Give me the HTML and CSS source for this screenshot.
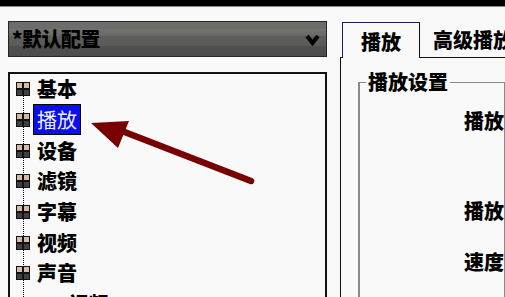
FILE: index.html
```html
<!DOCTYPE html>
<html lang="zh">
<head>
<meta charset="utf-8">
<link rel="stylesheet" href="styles.css">
</head>
<body>
<div class="topbar"></div>
<div class="main">
  <div class="left">
    <div class="combo">
      <span class="combo-text">*默认配置</span>
      <svg class="chev" width="15" height="12" viewBox="0 0 15 12"><polyline points="2,2 7.5,9 13,2" fill="none" stroke="#000" stroke-width="4"/></svg>
    </div>
    <div class="tree">
      <div class="row"><span class="plus"></span><span class="label">基本</span></div>
      <div class="row"><span class="plus"></span><span class="label selected">播放</span></div>
      <div class="row"><span class="plus"></span><span class="label">设备</span></div>
      <div class="row"><span class="plus"></span><span class="label">滤镜</span></div>
      <div class="row"><span class="plus"></span><span class="label">字幕</span></div>
      <div class="row"><span class="plus"></span><span class="label">视频</span></div>
      <div class="row"><span class="plus"></span><span class="label">声音</span></div>
      <div class="row"><span class="plus"></span><span class="label">3D 视频</span></div>
    </div>
  </div>
  <div class="right">
    <div class="tabs">
      <div class="tab active">播放</div>
      <div class="tab">高级播放</div>
    </div>
    <div class="panel">
      <fieldset class="group">
        <legend>播放设置</legend>
        <div class="fields">
          <div class="field f1">播放</div>
          <div class="field f2">播放</div>
          <div class="field f3">速度</div>
        </div>
      </fieldset>
    </div>
  </div>
</div>
<svg class="arrow" width="505" height="297" viewBox="0 0 505 297">
  <line x1="122" y1="131" x2="251" y2="181" stroke="#780000" stroke-width="6.5" stroke-linecap="round"/>
  <polygon points="91,123 129,121 118,148" fill="#780000"/>
</svg>
</body>
</html>
```
FILE: styles.css
```css
html, body {
  margin: 0;
  padding: 0;
  overflow: hidden;
}
body {
  width: 505px;
  height: 297px;
  background: #f9f9f9;
  font-family: "Noto Sans CJK SC", "Liberation Sans", sans-serif;
  font-size: 20px;
  font-weight: 900;
  color: #000;
  position: relative;
}
.topbar {
  height: 6px;
  background: #000;
  border-bottom: 1px solid #8c8c8c;
}
.main {
  display: flex;
  gap: 13px;
  padding: 14px 0 0 8px;
}
.left {
  width: 319px;
  flex: none;
  display: flex;
  flex-direction: column;
  gap: 15px;
}
.combo {
  box-sizing: border-box;
  height: 36px;
  border: 1px solid #262626;
  background: linear-gradient(#6c6c6a 0, #6c6c6a 22%, #72726f 22%, #686866 42%, #5e5e5c 42%, #5a5a58 72%, #4f4f4d 72%, #4c4c4a 100%);
  display: flex;
  align-items: center;
  justify-content: space-between;
  padding: 0 6px 0 3px;
}
.combo-text {
  line-height: 20px;
  letter-spacing: -0.5px;
}
.chev {
  display: block;
  margin-top: 2px;
}
.tree {
  border: 2px solid #111;
  height: 260px;
  box-sizing: border-box;
}
.row {
  height: 30.67px;
  display: flex;
  align-items: center;
  gap: 7px;
  padding-left: 6px;
}
.plus {
  position: relative;
  flex: none;
  width: 12px;
  height: 12px;
  border: 1px solid #111;
  background:
    linear-gradient(#111, #111) 5px 0 / 2px 100% no-repeat,
    linear-gradient(#111, #111) 0 5px / 100% 2px no-repeat,
    linear-gradient(to bottom, #d8b8a8 50%, #404040 50%);
}
.plus::after {
  content: "";
  position: absolute;
  left: 6px;
  top: 13px;
  height: 17px;
  border-left: 1px dotted #000;
}
.label {
  line-height: 20px;
  white-space: nowrap;
}
.label.selected {
  margin-left: -4px;
  padding: 0 3px;
  line-height: 29px;
  border: 1px solid #000;
  background: #0a0ff0;
  color: #eeeeff;
  font-weight: 400;
}
.right {
  flex: 1;
  min-width: 0;
  padding-top: 1px;
  display: flex;
  flex-direction: column;
}
.tabs {
  display: flex;
  align-items: flex-end;
  white-space: nowrap;
}
.tab {
  flex: none;
  line-height: 20px;
  padding: 7px 0 7px 13px;
}
.tab.active {
  box-sizing: border-box;
  width: 78px;
  height: 36px;
  margin-left: 2px;
  margin-bottom: -1px;
  padding: 9px 0 0 18px;
  border: 1px solid #1c2050;
  border-right-color: #111;
  border-bottom: none;
  background: #f9f9f9;
  position: relative;
  z-index: 1;
}
.panel {
  border-left: 1px solid #111;
  border-top: 1px solid #111;
  height: 260px;
  padding: 14px 0 0 17px;
}
.group {
  margin: 0;
  padding: 0 0 0 6px;
  border: 1px solid #8a8a8a;
  border-left-width: 2px;
  height: 240px;
}
.group legend {
  padding: 0 2px;
  line-height: 20px;
}
.fields {
  display: flex;
  flex-direction: column;
  padding-left: 98px;
  white-space: nowrap;
}
.field {
  line-height: 20px;
}
.f1 { margin-top: 19px; }
.f2 { margin-top: 70px; }
.f3 { margin-top: 31px; }
.arrow {
  position: absolute;
  left: 0;
  top: 0;
  pointer-events: none;
}
```
